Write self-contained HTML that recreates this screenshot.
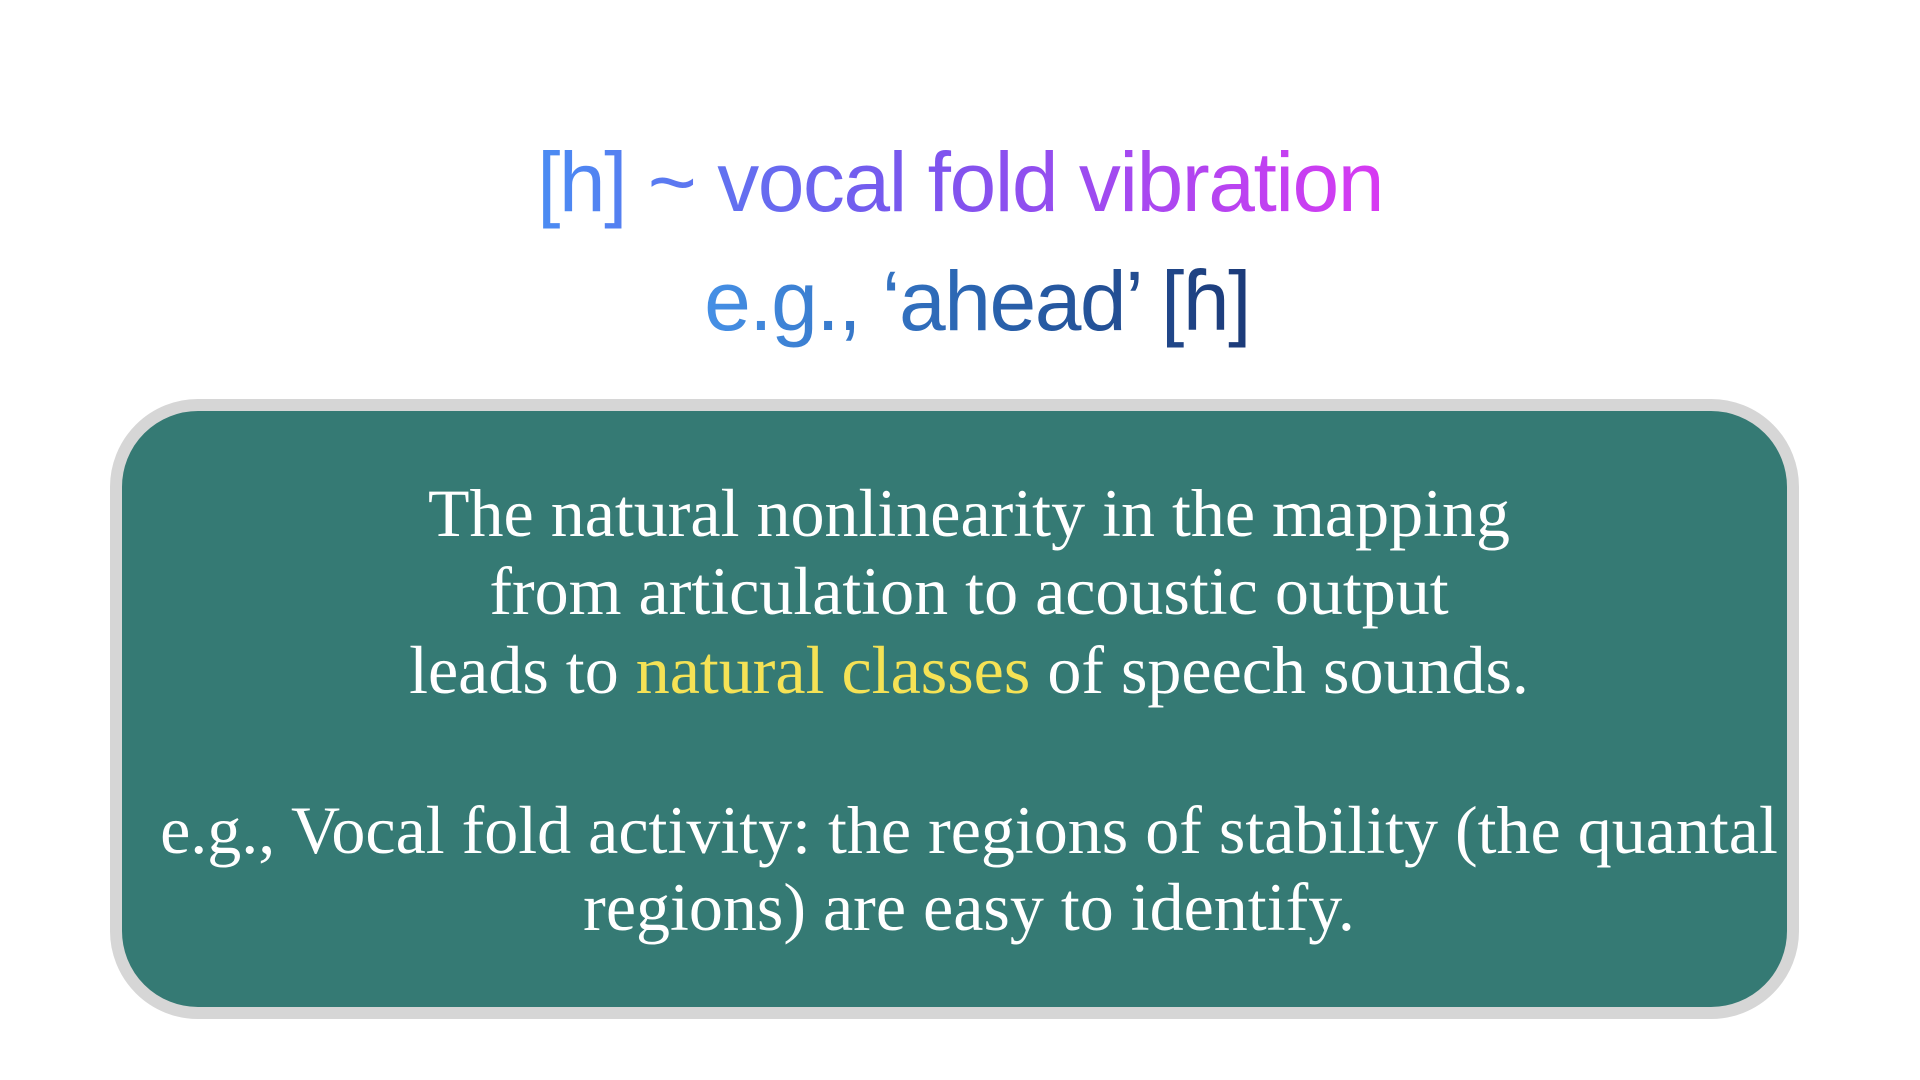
<!DOCTYPE html>
<html><head><meta charset="utf-8"><style>
html,body{margin:0;padding:0;background:#fff;width:1920px;height:1080px;overflow:hidden;position:relative}
.t1,.t2{position:absolute;left:0;width:1920px;text-align:center;font-family:"Liberation Sans",sans-serif;white-space:nowrap}
.t1 span,.t2 span{-webkit-background-clip:text;background-clip:text;color:transparent}
.t1{top:132px;font-size:84px;line-height:100px;letter-spacing:-1.5px}
.t1 span{background-image:linear-gradient(90deg,#4a8cf2,#7a55ee 45%,#d83af2)}
.t2{top:251px;left:17px;font-size:84px;line-height:100px;letter-spacing:-1.5px}
.t2 span{background-image:linear-gradient(90deg,#4690e6,#2a64b0 50%,#1c3a78)}
.box{position:absolute;left:110px;top:399px;width:1665px;height:596px;background:#357a74;border:12px solid #d6d6d6;border-radius:88px}
.tx{position:absolute;left:9px;width:1920px;text-align:center;font-family:"Liberation Serif",serif;font-size:68px;color:#fff;white-space:nowrap;line-height:78px}
.y{color:#f5e255}
</style></head><body>
<div class="t1"><span>[h] ~ vocal fold vibration</span></div>
<div class="t2"><span>e.g., ‘ahead’ [ɦ]</span></div>
<div class="box"></div>
<div class="tx" style="top:474px">The natural nonlinearity in the mapping</div>
<div class="tx" style="top:552px">from articulation to acoustic output</div>
<div class="tx" style="top:631px">leads to <span class="y">natural classes</span> of speech sounds.</div>
<div class="tx" style="top:791px;left:9px">e.g., Vocal fold activity: the regions of stability (the quantal</div>
<div class="tx" style="top:868px">regions) are easy to identify.</div>
</body></html>
